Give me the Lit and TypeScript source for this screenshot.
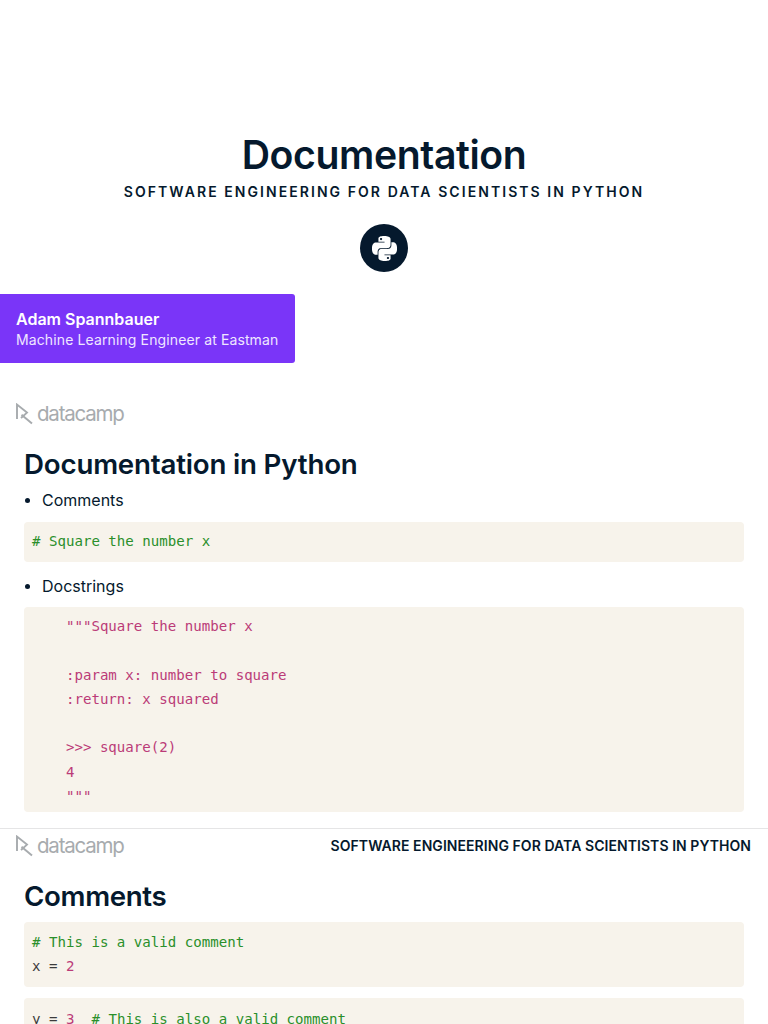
import { LitElement, html, css } from "lit";
import { customElement } from "lit/decorators.js";

const PY = "M14.25.18l.9.2.73.26.59.3.45.32.34.34.25.34.16.33.1.3.04.26.02.2-.01.13V8.5l-.05.63-.13.55-.21.46-.26.38-.3.31-.33.25-.35.19-.35.14-.33.1-.3.07-.26.04-.21.02H8.77l-.69.05-.59.14-.5.22-.41.27-.33.32-.27.35-.2.36-.15.37-.1.35-.07.32-.04.27-.02.21v3.06H3.17l-.21-.03-.28-.07-.32-.12-.35-.18-.36-.26-.36-.36-.35-.46-.32-.59-.28-.73-.21-.88-.14-1.05-.05-1.23.06-1.22.16-1.04.24-.87.32-.71.36-.57.4-.44.42-.33.42-.24.4-.16.36-.1.32-.05.24-.01h.16l.06.01h8.16v-.83H6.18l-.01-2.75-.02-.37.05-.34.11-.31.17-.28.25-.26.31-.23.38-.2.44-.18.51-.15.58-.12.64-.1.71-.06.77-.04.84-.02 1.27.05zm-6.3 1.98l-.23.33-.08.41.08.41.23.34.33.22.41.09.41-.09.33-.22.23-.34.08-.41-.08-.41-.23-.33-.33-.22-.41-.09-.41.09zm13.09 3.95l.28.06.32.12.35.18.36.27.36.35.35.47.32.59.28.73.21.88.14 1.04.05 1.23-.06 1.23-.16 1.04-.24.86-.32.71-.36.57-.4.45-.42.33-.42.24-.4.16-.36.09-.32.05-.24.02-.16-.01h-8.22v.82h5.84l.01 2.76.02.36-.05.34-.11.31-.17.29-.25.25-.31.24-.38.2-.44.17-.51.15-.58.13-.64.09-.71.07-.77.04-.84.01-1.27-.04-1.07-.14-.9-.2-.73-.25-.59-.3-.45-.33-.34-.34-.25-.34-.16-.33-.1-.3-.04-.25-.02-.2.01-.13v-5.34l.05-.64.13-.54.21-.46.26-.38.3-.32.33-.24.35-.2.35-.14.33-.1.3-.06.26-.04.21-.02.13-.01h5.84l.69-.05.59-.14.5-.21.41-.28.33-.32.27-.35.2-.36.15-.36.1-.35.07-.32.04-.28.02-.21V6.07h2.09l.14.01zm-6.47 14.25l-.23.33-.08.41.08.41.23.33.33.23.41.08.41-.08.33-.23.23-.33.08-.41-.08-.41-.23-.33-.33-.23-.41-.08-.41.08z";

const logo = html`<div class="logo">
  <svg width="18" height="22" viewBox="0 0 18 22" fill="none" stroke="#a7abae" stroke-width="1.9">
    <path d="M1 16V1.6L11 9.6L5 15"/><path d="M5.5 11.8L16 20.6"/>
  </svg>
  <span class="wordmark">datacamp</span>
</div>`;

@customElement("app-root")
export class AppRoot extends LitElement {
  static styles = css`
    :host { display: block; height: 1024px; overflow: hidden; background: #fff; color: #05192d; font-family: Inter, "Liberation Sans", sans-serif; }
    .slide1 { height: 828px; box-sizing: border-box; padding-top: 130px; }
    .divider { height: 1px; background: #e5e5e6; }
    .head { text-align: center; }
    h1 { margin: 0; font-size: 39.2px; line-height: 50px; font-weight: 600; letter-spacing: -0.4px; }
    .sub { margin-top: 2px; font-size: 14px; line-height: 20px; font-weight: 600; letter-spacing: 2.06px; }
    .circle { width: 48px; height: 48px; margin: 22px auto 0; border-radius: 50%; background: #05192d; display: flex; align-items: center; justify-content: center; }
    .author { margin-top: 22px; width: 295px; height: 69px; box-sizing: border-box; padding: 15px 0 0 16px; background: #7a35f8; color: #fff; border-radius: 0 3px 3px 0; }
    .author b { display: block; font-size: 16px; line-height: 21px; font-weight: 600; }
    .author span { display: block; font-size: 14px; line-height: 20px; letter-spacing: 0.12px; color: #efe6ff; }
    .logo { display: flex; align-items: flex-start; gap: 3px; height: 22px; }
    .wordmark { font-size: 20.5px; font-weight: 400; line-height: 22px; color: #a7abae; letter-spacing: -1.2px; }
    .logo-wrap { margin-top: 40px; padding-left: 16px; }
    .body { padding: 0 24px; }
    h2 { margin: 0; font-size: 27.7px; line-height: 36px; font-weight: 600; letter-spacing: -0.2px; }
    .h1-row { margin-top: 21px; }
    ul { margin: 0; padding: 0; list-style: none; }
    li { position: relative; padding-left: 18px; font-size: 16px; line-height: 24px; color: #05192d; }
    li::before { content: ""; position: absolute; left: 1px; top: 10px; width: 5px; height: 5px; border-radius: 50%; background: #05192d; }
    .item1 { margin-top: 6px; }
    .item2 { margin-top: 12px; }
    pre { margin: 9px 0 0; padding: 8px; background: #f7f3eb; border-radius: 4px; font-family: "DejaVu Sans Mono", monospace; font-size: 14.1px; line-height: 24.3px; color: #3b3b3b; }
    .one { margin-top: 10px; padding-top: 7px; height: 40px; box-sizing: border-box; }
    .doc { padding-top: 7px; height: 205px; box-sizing: border-box; }
    .c { color: #2a8f2a; }
    .s { color: #bb3b78; }
    .top { display: flex; justify-content: space-between; align-items: flex-start; padding: 6px 17px 0 16px; }
    .tag { font-size: 14px; line-height: 22px; font-weight: 600; letter-spacing: 0.06px; }
    .h2b { margin-top: 21px; letter-spacing: -0.35px; }
    .p1 { margin-top: 8px; }
    .p2 { margin-top: 11px; padding-top: 9px; }
  `;

  render() {
    return html`
      <section class="slide1">
        <div class="head">
          <h1>Documentation</h1>
          <div class="sub">SOFTWARE ENGINEERING FOR DATA SCIENTISTS IN PYTHON</div>
          <div class="circle">
            <svg width="25" height="25" viewBox="0 0 24 24" fill="#fff"><path d=${PY}></path></svg>
          </div>
        </div>
        <div class="author"><b>Adam Spannbauer</b><span>Machine Learning Engineer at Eastman</span></div>
        <div class="logo-wrap">${logo}</div>
        <div class="body">
          <h2 class="h1-row">Documentation in Python</h2>
          <ul class="item1"><li>Comments</li></ul>
          <pre class="one"><span class="c"># Square the number x</span></pre>
          <ul class="item2"><li>Docstrings</li></ul>
          <pre class="s doc">    """Square the number x

    :param x: number to square
    :return: x squared

    >>> square(2)
    4
    """</pre>
        </div>
      </section>
      <div class="divider"></div>
      <div class="top">${logo}<span class="tag">SOFTWARE ENGINEERING FOR DATA SCIENTISTS IN PYTHON</span></div>
      <div class="body">
        <h2 class="h2b">Comments</h2>
        <pre class="p1"><span class="c"># This is a valid comment</span>
x = <span class="s">2</span></pre>
        <pre class="p2">y = <span class="s">3</span>  <span class="c"># This is also a valid comment</span></pre>
      </div>
    `;
  }
}
